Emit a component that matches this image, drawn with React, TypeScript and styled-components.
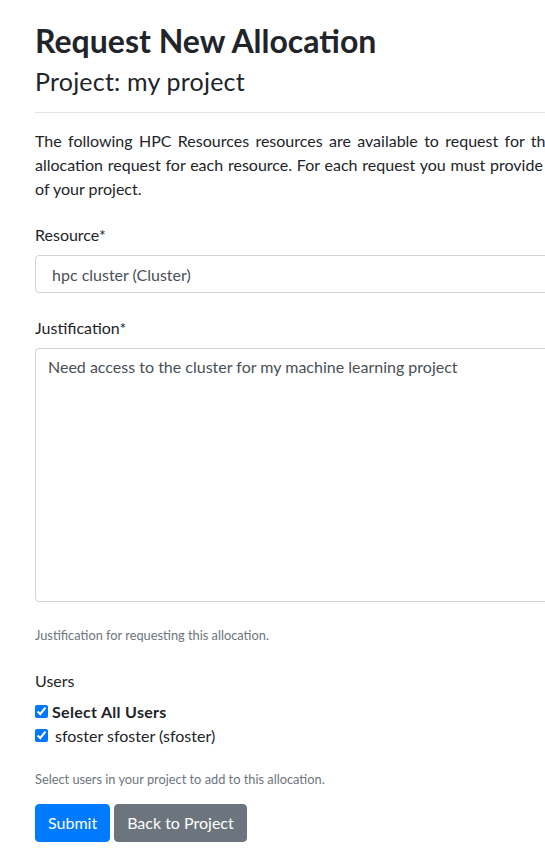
import React from "react";
import styled, { createGlobalStyle } from "styled-components";

const GlobalStyle = createGlobalStyle`
  html, body {
    margin: 0;
    padding: 0;
    background: #ffffff;
    overflow: hidden;
  }
  body {
    font-family: Lato, "Noto Sans", "Liberation Sans", sans-serif;
    font-size: 16px;
    line-height: 1.5;
    color: #212529;
  }
`;

const Page = styled.div`
  width: 1110px;
  padding: 22px 0 0 35px;
`;

const Title = styled.h2`
  margin: 0;
  font-size: 32px;
  font-weight: 700;
  line-height: 1.2;
`;

const Subtitle = styled.h3`
  margin: 6px 0 0;
  font-size: 25px;
  font-weight: 400;
  line-height: 1.2;
  letter-spacing: 0.2px;
`;

const Divider = styled.hr`
  margin: 16px 0;
  border: 0;
  border-top: 1px solid rgba(0, 0, 0, 0.1);
`;

const Intro = styled.p`
  margin: 0 0 22px;
  text-align: justify;
`;

// forced breaks so the visible lines match the original wrap
const IntroLine = styled.span<{ $last?: boolean }>`
  display: block;
  text-align-last: ${(p) => (p.$last ? "left" : "justify")};
`;

const FormGroup = styled.div`
  margin-bottom: 23px;
`;

const Label = styled.label`
  display: block;
  margin-bottom: 8px;
`;

const Select = styled.select`
  display: block;
  width: 100%;
  height: 38px;
  box-sizing: border-box;
  padding: 6px 12px;
  font: inherit;
  color: #495057;
  background: #ffffff;
  border: 1px solid #ced4da;
  border-radius: 4px;
`;

const TextArea = styled.textarea`
  display: block;
  width: 100%;
  height: 254px;
  box-sizing: border-box;
  padding: 6px 12px;
  font: inherit;
  color: #495057;
  border: 1px solid #ced4da;
  border-radius: 4px;
  resize: none;
`;

const HelpText = styled.small`
  display: block;
  margin-top: 24px;
  font-size: 12.8px;
  color: #6c757d;
`;

const CheckList = styled.div`
  display: flex;
  flex-direction: column;
  margin-top: -1px;
`;

const CheckRow = styled.label`
  display: flex;
  align-items: center;
  gap: 4px;
  height: 24px;
`;

const Check = styled.input`
  width: 13px;
  height: 13px;
  margin: 0;
  accent-color: #0075ff;
`;

const CheckText = styled.span<{ $bold?: boolean }>`
  font-weight: ${(p) => (p.$bold ? 700 : 400)};
  letter-spacing: ${(p) => (p.$bold ? "0.3px" : "normal")};
  padding-left: ${(p) => (p.$bold ? 0 : 3)}px;
`;

const UsersHelp = styled(HelpText)`
  margin-top: 22px;
`;

const Actions = styled.div`
  display: flex;
  gap: 4px;
  margin-top: 15px;
`;

const Button = styled.button<{ $variant: "primary" | "secondary" }>`
  height: 38px;
  padding: 6px 12px;
  font: inherit;
  color: #ffffff;
  border: 1px solid ${(p) => (p.$variant === "primary" ? "#007bff" : "#6c757d")};
  background: ${(p) => (p.$variant === "primary" ? "#007bff" : "#6c757d")};
  border-radius: 4px;
  cursor: pointer;
`;

export default function App() {
  return (
    <>
      <GlobalStyle />
      <Page>
        <Title>Request New Allocation</Title>
        <Subtitle>Project: my project</Subtitle>
        <Divider />
        <Intro>
          <IntroLine>
            The following HPC Resources resources are available to request for
            this project. If you need access to more than one of these, please
            submit a separate
          </IntroLine>
          <IntroLine>
            allocation request for each resource. For each request you must
            provide the justification for how you intend to use the resource to
            further the research goals
          </IntroLine>
          <IntroLine $last>of your project.</IntroLine>
        </Intro>
        <form onSubmit={(e) => e.preventDefault()}>
          <FormGroup>
            <Label htmlFor="resource">Resource*</Label>
            <Select id="resource" defaultValue="hpc">
              <option value="hpc">hpc cluster (Cluster)</option>
            </Select>
          </FormGroup>
          <FormGroup>
            <Label htmlFor="justification">Justification*</Label>
            <TextArea
              id="justification"
              defaultValue="Need access to the cluster for my machine learning project"
            />
            <HelpText>Justification for requesting this allocation.</HelpText>
          </FormGroup>
          <Label>Users</Label>
          <CheckList>
            <CheckRow>
              <Check type="checkbox" defaultChecked />
              <CheckText $bold>Select All Users</CheckText>
            </CheckRow>
            <CheckRow>
              <Check type="checkbox" defaultChecked />
              <CheckText>sfoster sfoster (sfoster)</CheckText>
            </CheckRow>
          </CheckList>
          <UsersHelp>Select users in your project to add to this allocation.</UsersHelp>
          <Actions>
            <Button type="submit" $variant="primary">
              Submit
            </Button>
            <Button type="button" $variant="secondary">
              Back to Project
            </Button>
          </Actions>
        </form>
      </Page>
    </>
  );
}
